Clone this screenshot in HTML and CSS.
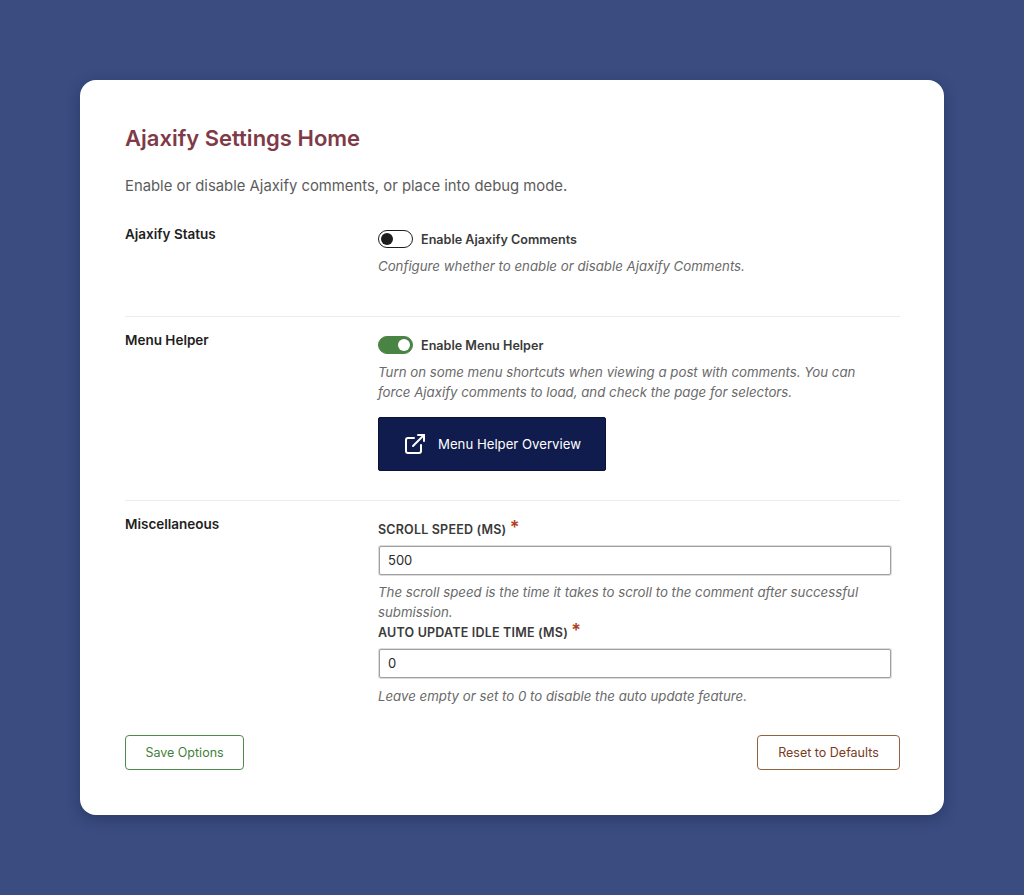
FILE: index.html
```html
<!DOCTYPE html>
<html lang="en">
<head>
    <meta charset="UTF-8">
    <meta name="viewport" content="width=device-width, initial-scale=1.0">
    <title>Ajaxify Settings Home</title>
    <link rel="stylesheet" href="styles.css">
</head>
<body>
    <div class="settings-card">
        <h1 class="settings-title">Ajaxify Settings Home</h1>
        <p class="settings-intro">Enable or disable Ajaxify comments, or place into debug mode.</p>

        <div class="settings-row status-row">
            <div class="row-label">Ajaxify Status</div>
            <div class="row-fields">
                <label class="toggle-line">
                    <span class="toggle"><span class="toggle-knob"></span></span>
                    <span class="toggle-text">Enable Ajaxify Comments</span>
                </label>
                <p class="help">Configure whether to enable or disable Ajaxify Comments.</p>
            </div>
        </div>

        <div class="settings-row helper-row">
            <div class="row-label">Menu Helper</div>
            <div class="row-fields">
                <label class="toggle-line">
                    <span class="toggle toggle-on"><span class="toggle-knob"></span></span>
                    <span class="toggle-text">Enable Menu Helper</span>
                </label>
                <p class="help">Turn on some menu shortcuts when viewing a post with comments. You can force Ajaxify comments to load, and check the page for selectors.</p>
                <a class="overview-button" href="#">
                    <svg class="overview-icon" width="24" height="24" viewBox="0 0 24 24" fill="none" stroke="currentColor" stroke-width="2" stroke-linecap="round" stroke-linejoin="round">
                        <path d="M18 13v6a2 2 0 0 1-2 2H5a2 2 0 0 1-2-2V8a2 2 0 0 1 2-2h6"/>
                        <path d="M15 3h6v6"/>
                        <path d="M10 14 21 3"/>
                    </svg>
                    Menu Helper Overview
                </a>
            </div>
        </div>

        <div class="settings-row misc-row">
            <div class="row-label">Miscellaneous</div>
            <div class="row-fields">
                <label class="field-label" for="scroll-speed">SCROLL SPEED (MS) <span class="required">*</span></label>
                <input class="text-input" id="scroll-speed" type="text" value="500">
                <p class="help field-help">The scroll speed is the time it takes to scroll to the comment after successful submission.</p>
                <label class="field-label" for="idle-time">AUTO UPDATE IDLE TIME (MS) <span class="required">*</span></label>
                <input class="text-input" id="idle-time" type="text" value="0">
                <p class="help field-help">Leave empty or set to 0 to disable the auto update feature.</p>
            </div>
        </div>

        <div class="settings-actions">
            <button class="action-button save-button" type="button">Save Options</button>
            <button class="action-button reset-button" type="button">Reset to Defaults</button>
        </div>
    </div>
</body>
</html>
```

FILE: styles.css
```css
* {
    margin: 0;
    padding: 0;
    box-sizing: border-box;
}

body {
    font-family: Inter, 'Liberation Sans', sans-serif;
    background: #3a4c80;
    color: #2a2a2a;
    padding: 80px;
    min-height: 895px;
}

.settings-card {
    background: #fff;
    border-radius: 16px;
    padding: 40px 44px 45px 45px;
    height: 735px;
    box-shadow: 0 4px 14px rgba(15, 25, 60, 0.35);
}

.settings-title {
    font-size: 22px;
    line-height: 36px;
    font-weight: 600;
    color: #7f3a47;
}

.settings-intro {
    font-size: 14.85px;
    line-height: 24px;
    color: #5c5c5c;
    margin-top: 18px;
}

.settings-row {
    display: grid;
    grid-template-columns: 253px 1fr;
    border-bottom: 1px solid #ececec;
}

.status-row {
    margin-top: 26px;
    height: 93px;
}

.helper-row {
    padding-top: 13px;
    height: 184px;
}

.misc-row {
    padding-top: 13px;
    border-bottom: 0;
}

.row-label {
    font-size: 13.5px;
    line-height: 20px;
    font-weight: 600;
    color: #1e1e1e;
}

.row-fields {
    padding-top: 5px;
}

.misc-row .row-fields {
    padding-top: 6px;
}

.toggle-line {
    display: flex;
    align-items: center;
    gap: 8px;
    height: 20px;
}

.toggle {
    display: flex;
    align-items: center;
    width: 35px;
    height: 18px;
    border: 1px solid #1e1e1e;
    border-radius: 9px;
    padding-left: 2px;
    background: #fff;
}

.toggle-knob {
    width: 12px;
    height: 12px;
    border-radius: 50%;
    background: #1e1e1e;
}

.toggle-on {
    background: #4a8444;
    border-color: #4a8444;
    justify-content: flex-end;
    padding: 0 2px 0 0;
}

.toggle-on .toggle-knob {
    background: #fff;
}

.toggle-text {
    font-size: 12.6px;
    font-weight: 600;
    color: #3a3a3a;
}

.help {
    max-width: 505px;
    font-size: 13.25px;
    line-height: 20px;
    font-style: italic;
    color: #6a6a6a;
    margin-top: 7px;
}

.overview-button {
    display: flex;
    align-items: center;
    gap: 11px;
    width: 228px;
    height: 54px;
    margin-top: 15px;
    padding-left: 24px;
    background: #111c4e;
    border: 1px solid #0b1235;
    border-radius: 2px;
    color: #fff;
    font-size: 13.2px;
    text-decoration: none;
}

.field-label {
    display: block;
    font-size: 12.5px;
    line-height: 20px;
    font-weight: 600;
    letter-spacing: 0.2px;
    color: #3a3a3a;
}

.required {
    color: #b0401c;
    font-size: 18px;
    line-height: 0;
}

.text-input {
    display: block;
    width: 512px;
    height: 29px;
    margin: 5.5px 0 0 1px;
    padding: 0 8px;
    border: 1px solid #a0a0a0;
    border-radius: 2px;
    box-shadow: 0 0 0 1px #dcdcdc;
    font-family: inherit;
    font-size: 13px;
    color: #2a2a2a;
}

.field-help {
    margin-top: 7.75px;
    margin-bottom: 1px;
}

.settings-actions {
    display: flex;
    justify-content: space-between;
    margin-top: 28.5px;
}

.action-button {
    height: 35px;
    background: #fff;
    border-radius: 4px;
    font-family: inherit;
    font-size: 12.5px;
    cursor: pointer;
}

.save-button {
    width: 119px;
    border: 1px solid #4f8c48;
    color: #3f7f3a;
}

.reset-button {
    width: 143px;
    border: 1px solid #95603f;
    color: #7a3a1c;
}
```
